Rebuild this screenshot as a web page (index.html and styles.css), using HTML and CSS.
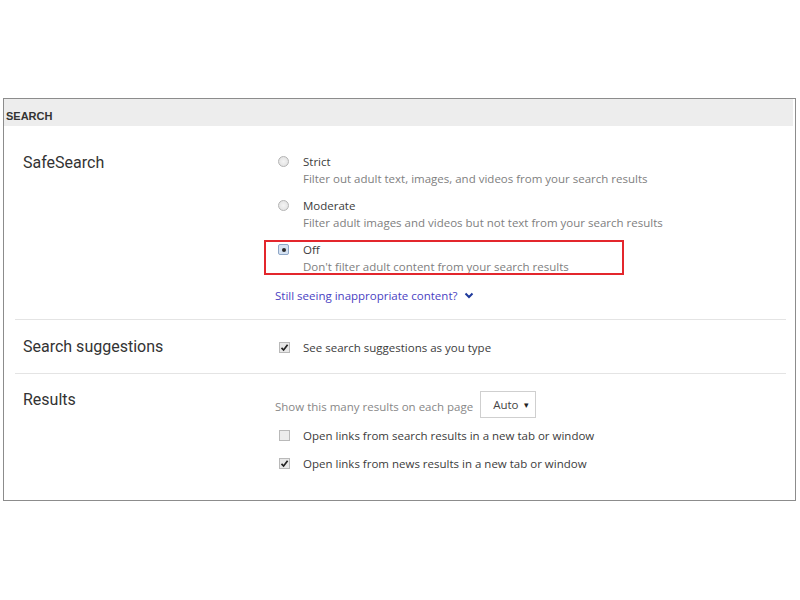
FILE: index.html
```html
<!DOCTYPE html>
<html>
<head>
<meta charset="utf-8">
<link rel="stylesheet" href="styles.css">
</head>
<body>
<div class="panel">
  <div class="panel-head">SEARCH</div>

  <section class="row row-safe">
    <div class="row-title">SafeSearch</div>
    <div class="row-body">
      <div class="option">
        <span class="radio"></span>
        <div class="option-text">
          <div class="label">Strict</div>
          <div class="desc">Filter out adult text, images, and videos from your search results</div>
        </div>
      </div>
      <div class="option">
        <span class="radio"></span>
        <div class="option-text">
          <div class="label">Moderate</div>
          <div class="desc">Filter adult images and videos but not text from your search results</div>
        </div>
      </div>
      <div class="option option-marked">
        <span class="radio radio-on"></span>
        <div class="option-text">
          <div class="label">Off</div>
          <div class="desc">Don't filter adult content from your search results</div>
        </div>
        <span class="highlight"></span>
      </div>
      <a class="more-link" href="#">Still seeing inappropriate content?
        <svg class="chev" width="10" height="7" viewBox="0 0 10 7"><path d="M1.5 1.5 L5 5 L8.5 1.5" fill="none" stroke="#1f3a9c" stroke-width="2"/></svg>
      </a>
    </div>
  </section>

  <section class="row row-sugg">
    <div class="row-title">Search suggestions</div>
    <div class="row-body">
      <div class="check-line">
        <span class="check check-on"><svg width="9" height="9" viewBox="0 0 9 9"><path d="M1.5 4.8 L3.6 7 L7.6 1.8" fill="none" stroke="#222" stroke-width="1.7"/></svg></span>
        <span class="label">See search suggestions as you type</span>
      </div>
    </div>
  </section>

  <section class="row row-results">
    <div class="row-title">Results</div>
    <div class="row-body">
      <div class="count-line">
        <span class="muted">Show this many results on each page</span>
        <span class="select">Auto <span class="caret">▾</span></span>
      </div>
      <div class="check-line tall">
        <span class="check"></span>
        <span class="label">Open links from search results in a new tab or window</span>
      </div>
      <div class="check-line tall">
        <span class="check check-on"><svg width="9" height="9" viewBox="0 0 9 9"><path d="M1.5 4.8 L3.6 7 L7.6 1.8" fill="none" stroke="#222" stroke-width="1.7"/></svg></span>
        <span class="label">Open links from news results in a new tab or window</span>
      </div>
    </div>
  </section>
</div>
</body>
</html>
```

FILE: styles.css
```css
html, body {
  margin: 0;
  padding: 0;
  background: #ffffff;
}

body {
  padding-top: 98px;
  padding-left: 3px;
}

.panel {
  width: 791px;
  border: 1px solid #8c8c8c;
  background: #ffffff;
  padding-bottom: 23px;
}

.panel-head {
  height: 27px;
  line-height: 35px;
  margin-right: 2px;
  background: #ededed;
  padding-left: 2px;
  font-family: "Liberation Sans", Arial, sans-serif;
  font-weight: bold;
  font-size: 11px;
  color: #333333;
  box-sizing: border-box;
  overflow: hidden;
}

.row {
  display: grid;
  grid-template-columns: 260px 1fr;
  margin: 0 9px 0 11px;
}

.row + .row {
  border-top: 1px solid #e4e4e4;
}

.row-title {
  padding-left: 8px;
  font-family: Roboto, "Liberation Sans", sans-serif;
  font-size: 16px;
  line-height: 20px;
  color: #333333;
}

.row-body {
  font-family: "Open Sans", "Noto Sans", sans-serif;
  font-size: 11.5px;
  color: #444444;
}

.row-safe {
  padding-top: 27px;
  padding-bottom: 15px;
}

.row-sugg {
  padding-top: 17px;
  padding-bottom: 16px;
  align-items: center;
}

.row-results {
  padding-top: 16px;
}

.option {
  position: relative;
  display: flex;
  align-items: flex-start;
  margin-bottom: 10px;
}

.option-text {
  margin-left: 14px;
}

.label {
  line-height: 17px;
  color: #3c3c3c;
}

.desc {
  line-height: 17px;
  color: #808080;
}

.radio {
  margin-left: 3px;
  margin-top: 3px;
  width: 11px;
  height: 11px;
  border: 1px solid #b4b4b4;
  border-radius: 50%;
  background: radial-gradient(circle, #f4f4f4 0, #dedede 100%);
  box-sizing: border-box;
  flex: none;
  position: relative;
}

.radio-on {
  border-radius: 2px;
  border-color: #8ea6c6;
  background: #d5e2f2;
}

.radio-on::after {
  content: "";
  position: absolute;
  left: 2.5px;
  top: 2.5px;
  width: 4px;
  height: 4px;
  border-radius: 50%;
  background: #2b2b2b;
}

.highlight {
  position: absolute;
  left: -11px;
  top: -1px;
  width: 360px;
  height: 35px;
  border: 2px solid #e3262c;
  box-sizing: border-box;
}

.more-link {
  display: inline-flex;
  align-items: center;
  margin-top: 2px;
  line-height: 17px;
  color: #4a3fc2;
  text-decoration: none;
}

.chev {
  margin-left: 7px;
}

.check-line {
  display: flex;
  align-items: center;
  line-height: 17px;
}

.check-line.tall {
  height: 28px;
}

.check-line .label {
  margin-left: 13px;
}

.check {
  margin-left: 4px;
  width: 11px;
  height: 11px;
  border: 1px solid #b9b9b9;
  background: #ececec;
  box-sizing: border-box;
  display: flex;
  align-items: center;
  justify-content: center;
  flex: none;
}

.check-on {
  background: #e8e8e8;
}

.count-line {
  display: flex;
  align-items: center;
  height: 27px;
  margin-top: 1px;
  margin-bottom: 3px;
}

.muted {
  color: #888888;
  margin-top: 3px;
}

.select {
  margin-left: 7px;
  width: 56px;
  height: 27px;
  border: 1px solid #cfcfcf;
  box-sizing: border-box;
  display: flex;
  align-items: center;
  padding-left: 12px;
  color: #444444;
}

.caret {
  margin-left: 5px;
  font-size: 9px;
  color: #222222;
}
```
